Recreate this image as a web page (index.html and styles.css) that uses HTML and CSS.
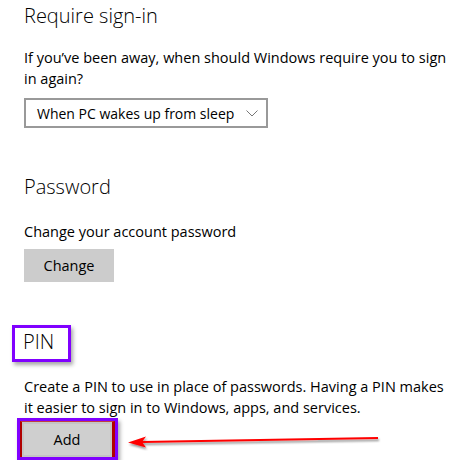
FILE: index.html
```html
<!DOCTYPE html>
<html lang="en">
<head>
  <meta charset="UTF-8">
  <title>Sign-in options</title>
  <link rel="stylesheet" href="styles.css">
</head>
<body>
  <div class="page">

    <section class="group">
      <h2>Require sign-in</h2>
      <p class="desc">If you’ve been away, when should Windows require you to sign in again?</p>
      <div class="select">
        <span>When PC wakes up from sleep</span>
        <svg class="chevron" width="12" height="7" viewBox="0 0 12 7">
          <path d="M0.5 0.5 L6 6 L11.5 0.5" fill="none" stroke="#777" stroke-width="1"/>
        </svg>
      </div>
    </section>

    <section class="group password">
      <h2>Password</h2>
      <p class="desc">Change your account password</p>
      <button class="btn">Change</button>
    </section>

    <section class="group pin">
      <h2 class="mark">PIN</h2>
      <p class="desc">Create a PIN to use in place of passwords. Having a PIN makes it easier to sign in to Windows, apps, and services.</p>
      <div class="mark-btn">
        <button class="btn">Add</button>
      </div>
    </section>

    <!-- red arrow pointing at the Add button -->
    <svg class="arrow" width="260" height="20" viewBox="0 0 260 20">
      <defs>
        <filter id="shadow" x="-5%" y="-50%" width="110%" height="200%">
          <feDropShadow dx="1" dy="2" stdDeviation="1.2" flood-color="#000" flood-opacity="0.45"/>
        </filter>
      </defs>
      <g filter="url(#shadow)">
        <line x1="16" y1="11" x2="252" y2="7" stroke="#f00" stroke-width="2"/>
        <path d="M2 11.5 L20 5.5 L16 11 L20 16.5 Z" fill="#f00"/>
      </g>
    </svg>

  </div>
</body>
</html>
```

FILE: styles.css
```css
body {
  margin: 0;
  background: #ffffff;
  font-family: 'Open Sans', 'Noto Sans', sans-serif;
  color: #000;
}

.page {
  position: relative;
  padding: 2px 0 0 24px;
  width: 426px;
}

h2 {
  margin: 0;
  font-size: 20px;
  font-weight: 300;
  line-height: 28px;
  color: #000;
}

.desc {
  margin: 17px 0 9px;
  font-size: 14.5px;
  line-height: 21px;
}

.select {
  display: flex;
  align-items: center;
  justify-content: space-between;
  box-sizing: border-box;
  width: 244px;
  height: 30px;
  padding: 0 8px 0 11px;
  border: 2px solid #999;
  font-size: 14px;
}

.chevron {
  margin-top: 1px;
}

.password {
  margin-top: 45px;
}

.password .desc {
  margin: 20px 0 7px;
}

.btn {
  width: 90px;
  height: 33px;
  border: none;
  background: #cccccc;
  font-family: inherit;
  font-size: 14.5px;
  color: #000;
  padding: 0;
}

.pin {
  margin-top: 43px;
}

.mark {
  display: inline-block;
  margin-left: -12px;
  padding: 0 14px 3px 8px;
  border: 3px solid #8000ff;
  box-shadow: 2px 3px 4px rgba(0, 0, 0, 0.35);
}

.pin .desc {
  margin: 14px 0 0;
}

.mark-btn {
  display: inline-flex;
  margin-left: -7px;
  border: 3px solid #8000ff;
  box-shadow: 2px 3px 4px rgba(0, 0, 0, 0.35);
}

.mark-btn .btn {
  width: 95px;
  height: 36px;
  border-left: 2px solid #b00000;
  border-right: 3px solid #b00000;
  border-top: 1px solid #c04040;
  box-shadow: inset 0 0 0 2px #c4c4c4;
  background: #cfcfcf;
}

.arrow {
  position: absolute;
  left: 126px;
  top: 431px;
}
```
